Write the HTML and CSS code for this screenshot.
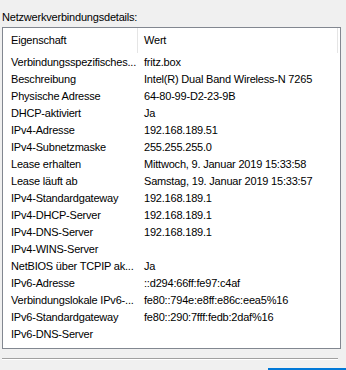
FILE: index.html
```html
<!DOCTYPE html>
<html lang="de">
<head>
  <meta charset="UTF-8" />
  <title>Netzwerkverbindungsdetails</title>
  <link rel="stylesheet" href="styles.css">
</head>
<body>
  <div class="dialog">
    <div class="caption">Netzwerkverbindungsdetails:</div>

    <div class="listbox">
      <div class="header">
        <div class="col name">Eigenschaft</div>
        <div class="col value">Wert</div>
        <div class="edge"></div>
      </div>
      <div class="rows">
        <div class="row"><span class="name">Verbindungsspezifisches...</span><span class="value">fritz.box</span></div>
        <div class="row"><span class="name">Beschreibung</span><span class="value">Intel(R) Dual Band Wireless-N 7265</span></div>
        <div class="row"><span class="name">Physische Adresse</span><span class="value">64-80-99-D2-23-9B</span></div>
        <div class="row"><span class="name">DHCP-aktiviert</span><span class="value">Ja</span></div>
        <div class="row"><span class="name">IPv4-Adresse</span><span class="value">192.168.189.51</span></div>
        <div class="row"><span class="name">IPv4-Subnetzmaske</span><span class="value">255.255.255.0</span></div>
        <div class="row"><span class="name">Lease erhalten</span><span class="value">Mittwoch, 9. Januar 2019 15:33:58</span></div>
        <div class="row"><span class="name">Lease läuft ab</span><span class="value">Samstag, 19. Januar 2019 15:33:57</span></div>
        <div class="row"><span class="name">IPv4-Standardgateway</span><span class="value">192.168.189.1</span></div>
        <div class="row"><span class="name">IPv4-DHCP-Server</span><span class="value">192.168.189.1</span></div>
        <div class="row"><span class="name">IPv4-DNS-Server</span><span class="value">192.168.189.1</span></div>
        <div class="row"><span class="name">IPv4-WINS-Server</span><span class="value"></span></div>
        <div class="row"><span class="name">NetBIOS über TCPIP ak...</span><span class="value">Ja</span></div>
        <div class="row"><span class="name">IPv6-Adresse</span><span class="value">::d294:66ff:fe97:c4af</span></div>
        <div class="row"><span class="name">Verbindungslokale IPv6-...</span><span class="value">fe80::794e:e8ff:e86c:eea5%16</span></div>
        <div class="row"><span class="name">IPv6-Standardgateway</span><span class="value">fe80::290:7fff:fedb:2daf%16</span></div>
        <div class="row"><span class="name">IPv6-DNS-Server</span><span class="value"></span></div>
      </div>
    </div>

    <div class="separator"></div>
    <div class="footer">
      <div class="button"></div>
    </div>
  </div>
</body>
</html>
```

FILE: styles.css
```css
body {
  margin: 0;
  background: #f0f0f0;
  font-family: "Liberation Sans", Arial, sans-serif;
  font-size: 11px;
  letter-spacing: -0.2px;
  color: #000;
  overflow: hidden;
}

.dialog {
  width: 346px;
  height: 370px;
}

.caption {
  padding: 10px 0 0 2px;
  height: 17px;
  line-height: 15px;
}

.listbox {
  margin-left: 2px;
  width: 337px;
  height: 320px;
  border: 1px solid #828790;
  background: #fff;
}

.header {
  display: flex;
  height: 25px;
  line-height: 25px;
}

.header .col {
  padding-left: 8px;
}

.header .name {
  width: 126px;
  border-right: 1px solid #e5e5e5;
}

.header .value {
  flex: 1;
  padding-left: 6px;
}

.header .edge {
  width: 1px;
  margin-right: 2px;
  background: #e5e5e5;
}

.rows {
  padding-top: 1px;
}

.row {
  display: flex;
  height: 17px;
  line-height: 17px;
  white-space: nowrap;
}

.row .name {
  width: 127px;
  padding-left: 8px;
  overflow: hidden;
}

.row .value {
  padding-left: 6px;
}

.separator {
  margin: 9px 0 0 2px;
  width: 336px;
  height: 1px;
  background: #a0a0a0;
  border-bottom: 1px solid #fff;
}

.footer {
  display: flex;
  justify-content: flex-end;
  padding-top: 8px;
}

.button {
  width: 78px;
  height: 10px;
  border-top: 2px solid #0078d7;
  background: #e1e1e1;
}
```
